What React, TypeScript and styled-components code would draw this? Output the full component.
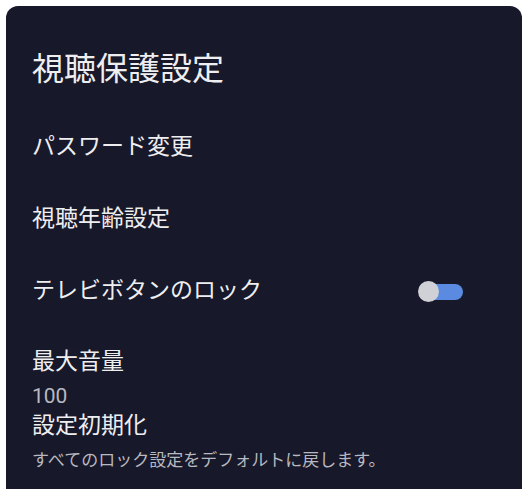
import React from "react";
import styled, { createGlobalStyle } from "styled-components";

const GlobalStyle = createGlobalStyle`
  html, body {
    margin: 0;
    padding: 0;
    background: #ffffff;
  }
  body {
    font-family: "Noto Sans CJK JP", "Noto Sans", sans-serif;
  }
`;

const Page = styled.div`
  width: 526px;
  height: 489px;
  padding: 6px 4px 0 6px;
  box-sizing: border-box;
  overflow: hidden;
`;

const Panel = styled.div`
  height: 495px;
  background-color: #171829;
  border-radius: 12px;
  padding: 40px 59px 0 26px;
  box-sizing: border-box;
  display: flex;
  flex-direction: column;
  color: #eeeef1;
`;

const Title = styled.h1`
  margin: 0 0 22px;
  font-size: 32px;
  line-height: 40px;
  font-weight: 400;
`;

const Row = styled.div`
  height: 72px;
  display: flex;
  align-items: center;
  justify-content: space-between;
`;

const Label = styled.div`
  font-size: 23px;
  line-height: 30px;
`;

const Item = styled.div<{ $top: number }>`
  display: flex;
  flex-direction: column;
  margin-top: ${(p) => p.$top}px;
`;

const Sub = styled.div<{ $size: number; $gap: number; $latin?: boolean }>`
  font-family: ${(p) =>
    p.$latin ? `Roboto, "Noto Sans", sans-serif` : "inherit"};
  font-size: ${(p) => p.$size}px;
  line-height: 22px;
  margin-top: ${(p) => p.$gap}px;
  color: #b8b9c0;
`;

const Toggle = styled.div`
  position: relative;
  width: 43px;
  height: 16px;
  margin-top: 7px;
  border-radius: 8px;
  background: #5a8be0;

  &::before {
    content: "";
    position: absolute;
    left: -2px;
    top: -2.5px;
    width: 21px;
    height: 21px;
    border-radius: 50%;
    background: #d0d1d7;
  }
`;

export default function App() {
  return (
    <Page>
      <GlobalStyle />
      <Panel>
        <Title>視聴保護設定</Title>
        <Row>
          <Label>パスワード変更</Label>
        </Row>
        <Row>
          <Label>視聴年齢設定</Label>
        </Row>
        <Row>
          <Label>テレビボタンのロック</Label>
          <Toggle />
        </Row>
        <Item $top={20}>
          <Label>最大音量</Label>
          <Sub $size={21} $gap={11} $latin>100</Sub>
        </Item>
        <Item $top={1}>
          <Label>設定初期化</Label>
          <Sub $size={17} $gap={10}>すべてのロック設定をデフォルトに戻します。</Sub>
        </Item>
      </Panel>
    </Page>
  );
}
